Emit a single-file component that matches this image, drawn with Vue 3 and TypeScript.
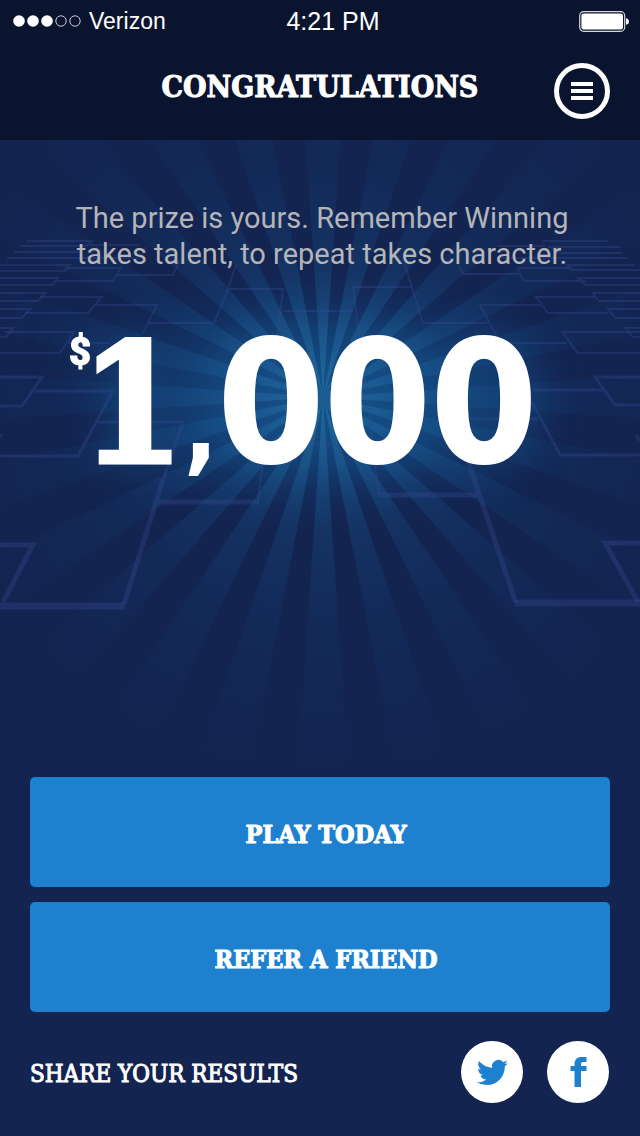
<script setup lang="ts">
interface BracketGroup {
  width: number
  d: string
}

const signal: boolean[] = [true, true, true, false, false]
const message: string[] = [
  'The prize is yours. Remember Winning',
  'takes talent, to repeat takes character.',
]
const actions: string[] = ['Play today', 'Refer a friend']

const centre = { x: 323, y: 257 }
const reach = 430
const rayCount = 24

function rayPoints(index: number): string {
  const mid = (index * 2 * Math.PI) / rayCount
  const half = (3.9 * Math.PI) / 180
  const edge = (angle: number) =>
    `${(centre.x + Math.sin(angle) * reach).toFixed(1)},${(centre.y + Math.cos(angle) * reach).toFixed(1)}`
  return `${centre.x},${centre.y} ${edge(mid - half)} ${edge(mid + half)}`
}

const rays: string[] = Array.from({ length: rayCount }, (_, i) => rayPoints(i))

const brackets: BracketGroup[] = [
  {
    width: 2,
    d: `M27 101H92L86 106H20M90 105H140M7 118H140L146 107M0 125H70L65 131H0M65 128H121L113 141H55
        M117 135H173L180 120M0 138H58L52 145H0M0 153H45L38 161H0M0 169H30L22 178H0M0 188H13L6 197H0
        M14 112H80M543 101H608M548 107H620M555 113H622M500 118H628M567 125H635M567 125L572 130H640
        M517 128H572M517 128L524 141H586M458 125L463 134H519M640 138H578L586 145H640M640 153H593L599 161H640
        M640 169H608L615 178H640M640 188H625L633 197H640M497 106H545`,
  },
  {
    width: 2,
    d: `M40 157H102L88 173H25M97 165H157L143 193M148 183H214L228 149L236 125M228 149H283L258 362
        M5 192H74L60 213H0M68 203H110M283 171H353M595 157H536L548 173H608M541 165H480L497 197
        M405 125L423 183H487M411 147H353L379 355M640 192H562L578 213H640M507 203H567`,
  },
  {
    width: 3,
    d: `M0 237H42L22 266H0M35 251H113L78 316H0M97 282H183L163 340M640 237H595L615 265H640
        M603 250H533M532 262L560 315H640M470 279H538M457 279L470 327M308 303H345M0 297L2 294M636 295L640 301`,
  },
  {
    width: 5,
    d: 'M163 340L124 464M158 362H259M0 405H33L3 462M379 355H481M470 327L516 463M640 403H605L638 462',
  },
  { width: 7, d: 'M0 466H125M515 463H640' },
]
</script>

<template>
  <div class="page">
    <header class="header">
      <div class="status">
        <div class="carrier">
          <svg class="signal" viewBox="0 0 68 12" aria-hidden="true">
            <circle
              v-for="(on, i) in signal"
              :key="i"
              :cx="6 + i * 14"
              cy="6"
              :r="on ? 5.8 : 5.2"
              :fill="on ? '#fff' : 'none'"
              :stroke="on ? 'none' : '#c9ccd6'"
            />
          </svg>
          <span>Verizon</span>
        </div>
        <time class="clock">4:21 PM</time>
        <svg class="battery" viewBox="0 0 50 21" aria-label="Battery full">
          <rect x="0.7" y="0.7" width="45" height="19.6" rx="4" fill="none" stroke="#d5d7de" stroke-width="1.2" />
          <rect x="2.4" y="2.4" width="41.6" height="16.2" rx="2.4" fill="#fff" />
          <path d="M47 7.2c2 .4 3 1.600 3 3.300s-1 2.900-3 3.300z" fill="#fff" />
        </svg>
      </div>
      <div class="titlebar">
        <h1 class="title">CONGRATULATIONS</h1>
        <button class="menu" type="button" aria-label="Menu">
          <svg viewBox="0 0 22 18" aria-hidden="true">
            <path d="M0 2h22M0 9h22M0 16h22" stroke="#fff" stroke-width="3.800" />
          </svg>
        </button>
      </div>
    </header>

    <main class="content">
      <svg class="backdrop" viewBox="0 0 640 640" preserveAspectRatio="xMidYMin slice" aria-hidden="true">
        <defs>
          <radialGradient id="rayFade" gradientUnits="userSpaceOnUse" :cx="centre.x" :cy="centre.y" r="380">
            <stop offset="0" stop-color="#3585b2" stop-opacity="0.6" />
            <stop offset="0.15" stop-color="#2a78ad" stop-opacity="0.4" />
            <stop offset="0.35" stop-color="#1a5f9a" stop-opacity="0.26" />
            <stop offset="0.6" stop-color="#114a86" stop-opacity="0.16" />
            <stop offset="1" stop-color="#12408a" stop-opacity="0" />
          </radialGradient>
          <radialGradient id="glow">
            <stop offset="0" stop-color="#155a93" stop-opacity="0.85" />
            <stop offset="0.5" stop-color="#13508a" stop-opacity="0.55" />
            <stop offset="1" stop-color="#132f68" stop-opacity="0" />
          </radialGradient>
        </defs>
        <ellipse cx="323" cy="257" rx="270" ry="135" fill="url(#glow)" />
        <polygon v-for="(points, i) in rays" :key="i" :points="points" fill="url(#rayFade)" />
        <path
          v-for="(group, i) in brackets"
          :key="`b${i}`"
          :d="group.d"
          :stroke-width="group.width"
          fill="none"
          stroke="#3c4a94"
          stroke-opacity="0.34"
        />
      </svg>

      <p class="message">
        <span v-for="line in message" :key="line">{{ line }}</span>
      </p>
      <p class="amount">
        <span class="currency">$</span><span class="lead">1</span><span class="comma">,</span><span class="digits">000</span>
      </p>

      <div class="actions">
        <button v-for="label in actions" :key="label" class="action" type="button">{{ label.toUpperCase() }}</button>
      </div>

      <footer class="share">
        <span class="share-label">SHARE YOUR RESULTS</span>
        <nav class="networks" aria-label="Share">
          <a class="network" href="#twitter" aria-label="Twitter">
            <svg width="31" height="31" viewBox="0 0 24 24" fill="#1e81d0" aria-hidden="true">
              <path d="M23.950 4.570a10 10 0 0 1-2.820.770 4.960 4.960 0 0 0 2.160-2.720c-.950.550-2 .950-3.130 1.180a4.920 4.920 0 0 0-8.380 4.480C7.690 8.100 4.070 6.130 1.640 3.160a4.920 4.920 0 0 0 1.520 6.570 4.900 4.900 0 0 1-2.230-.610v.060a4.920 4.920 0 0 0 3.950 4.830 4.960 4.960 0 0 1-2.210.080 4.940 4.940 0 0 0 4.600 3.420A9.870 9.870 0 0 1 0 19.540a13.990 13.990 0 0 0 7.550 2.210c9.050 0 14-7.500 14-13.980 0-.210 0-.420-.020-.630a9.940 9.940 0 0 0 2.420-2.570z" />
            </svg>
          </a>
          <a class="network" href="#facebook" aria-label="Facebook">
            <svg width="17" height="30" viewBox="0 0 17 30" fill="#1e81d0" aria-hidden="true">
              <path d="M4.500 30V14H0.500V9H4.500V7.500C4.500 2.500 7 0 11.500 0H16.500V5H13.500C11.600 5 11 5.800 11 7.500V9H16.500V14H11V30Z" />
            </svg>
          </a>
        </nav>
      </footer>
    </main>
  </div>
</template>

<style>
body {
  margin: 0;
  background: #132450;
}
</style>

<style scoped>
.page {
  display: flex;
  flex-direction: column;
  min-height: 100vh;
  background: #132450;
  color: #fff;
  font-family: "DejaVu Serif Condensed", "DejaVu Serif", serif;
}

.header {
  height: 140px;
  background: #0a142e;
}

.status {
  display: grid;
  grid-template-columns: 1fr auto 1fr;
  align-items: center;
  height: 42px;
  padding: 0 11px 0 13px;
  font-family: "Liberation Sans", Arial, sans-serif;
  font-size: 23px;
}

.carrier {
  display: flex;
  align-items: center;
  gap: 8px;
}

.signal {
  width: 68px;
  height: 12px;
}

.clock {
  padding: 0 2px 0 26px;
  font-size: 25px;
}

.battery {
  width: 50px;
  height: 21px;
  justify-self: end;
}

.titlebar {
  display: grid;
  grid-template-columns: 56px 1fr 56px;
  align-items: center;
  padding: 21px 30px 0;
}

.title {
  grid-column: 2;
  margin: 0;
  padding-bottom: 8px;
  text-align: center;
  font-size: 30px;
  font-weight: 700;
  line-height: 36px;
  -webkit-text-stroke: 1px #fff;
}

.menu {
  display: flex;
  align-items: center;
  justify-content: center;
  width: 56px;
  height: 56px;
  padding: 0;
  border: 5px solid #fff;
  border-radius: 50%;
  background: none;
}

.menu svg {
  width: 22px;
  height: 18px;
}

.content {
  position: relative;
  display: flex;
  flex: 1;
  flex-direction: column;
  padding: 60px 30px 33px;
  isolation: isolate;
}

.backdrop {
  position: absolute;
  top: 0;
  left: 0;
  z-index: -1;
  width: 100%;
  aspect-ratio: 1;
}

.message {
  display: flex;
  flex-direction: column;
  align-items: center;
  margin: 0;
  padding-left: 4px;
  color: #b3b5b9;
  font-family: Roboto, sans-serif;
  font-size: 29px;
  line-height: 36px;
}

.amount {
  display: flex;
  align-items: baseline;
  justify-content: center;
  margin: 44px 0 0;
  padding-right: 34px;
  font-family: "DejaVu Sans Condensed", "DejaVu Sans", sans-serif;
  font-size: 170px;
  font-weight: 700;
  line-height: 174px;
  filter: drop-shadow(0 0 20px #14599480);
}

.currency {
  align-self: flex-start;
  margin: 12px -10px 0 0;
  font-family: Roboto, sans-serif;
  font-size: 38px;
  font-weight: 900;
  line-height: 48px;
  -webkit-text-stroke: 1px #fff;
}

.lead {
  font-family: "DejaVu Serif Condensed", "DejaVu Serif", serif;
  font-size: 164px;
  -webkit-text-stroke: 5px #fff;
}

.comma {
  font-size: 100px;
}

.digits {
  -webkit-text-stroke: 2px #fff;
}

.actions {
  display: flex;
  flex-direction: column;
  gap: 15px;
  margin-top: auto;
}

.action {
  height: 110px;
  padding: 4px 0 0 12px;
  border: 0;
  border-radius: 5px;
  background: #1e81d0;
  color: #fff;
  font-family: inherit;
  font-size: 25px;
  font-weight: 700;
  -webkit-text-stroke: 1px #fff;
}

.share {
  display: flex;
  align-items: center;
  justify-content: space-between;
  margin-top: 29px;
  padding-right: 1px;
}

.share-label {
  padding-top: 3px;
  font-size: 24px;
  -webkit-text-stroke: 1px #fff;
}

.networks {
  display: flex;
  gap: 24px;
}

.network {
  display: flex;
  align-items: center;
  justify-content: center;
  width: 62px;
  height: 62px;
  border-radius: 50%;
  background: #fff;
}
</style>
